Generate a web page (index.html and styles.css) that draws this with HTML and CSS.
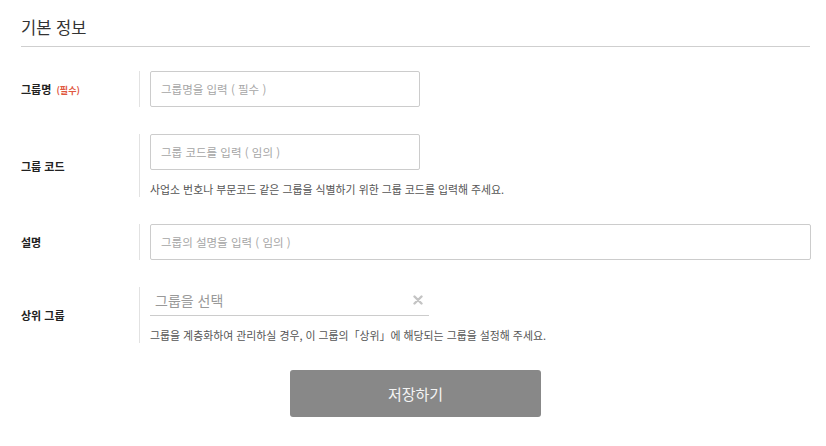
FILE: index.html
```html
<!DOCTYPE html>
<html lang="ko">
<head>
<meta charset="utf-8">
<link rel="stylesheet" href="styles.css">
</head>
<body>
<div class="page">
  <h2 class="title">기본 정보</h2>
  <div class="form">
    <div class="row">
      <div class="label">그룹명 <span class="req">(필수)</span></div>
      <div class="field">
        <div class="input w270"><span class="ph">그룹명을 입력 ( 필수 )</span></div>
      </div>
    </div>
    <div class="row">
      <div class="label">그룹 코드</div>
      <div class="field">
        <div class="input w270"><span class="ph">그룹 코드를 입력 ( 임의 )</span></div>
        <p class="help">사업소 번호나 부문코드 같은 그룹을 식별하기 위한 그룹 코드를 입력해 주세요.</p>
      </div>
    </div>
    <div class="row">
      <div class="label">설명</div>
      <div class="field">
        <div class="input wide"><span class="ph">그룹의 설명을 입력 ( 임의 )</span></div>
      </div>
    </div>
    <div class="row">
      <div class="label">상위 그룹</div>
      <div class="field">
        <div class="select">
          <span class="sel-ph">그룹을 선택</span>
          <svg class="clear" width="10" height="10" viewBox="0 0 10 10"><path d="M1.5 1.5 L8.5 8.5 M8.5 1.5 L1.5 8.5" stroke="#c4c4c4" stroke-width="2.4" stroke-linecap="round"/></svg>
        </div>
        <p class="help">그룹을 계층화하여 관리하실 경우, 이 그룹의「상위」에 해당되는 그룹을 설정해 주세요.</p>
      </div>
    </div>
  </div>
  <div class="actions">
    <button class="save">저장하기</button>
  </div>
</div>
</body>
</html>
```
FILE: styles.css
```css
* { box-sizing: border-box; }
body {
  margin: 0;
  background: #fff;
  font-family: "Noto Sans CJK KR", "Noto Sans", sans-serif;
  color: #222;
}
.page {
  padding: 0 16px 0 21px;
}
.title {
  margin: 0;
  padding-top: 15px;
  height: 47px;
  font-size: 16.5px;
  font-weight: 400;
  line-height: 24px;
  color: #333;
  border-bottom: 1px solid #cfcfcf;
}
.form {
  padding-top: 24px;
  display: flex;
  flex-direction: column;
  gap: 27px;
}
.row {
  display: flex;
  align-items: center;
}
.label {
  width: 118px;
  flex: none;
  font-size: 11px;
  font-weight: 700;
  color: #222;
}
.req {
  font-size: 9px;
  font-weight: 700;
  color: #e0573f;
  margin-left: 2px;
}
.field {
  flex: 1;
  align-self: stretch;
  border-left: 1px solid #e2e2e2;
  padding-left: 10px;
}
.input {
  height: 36px;
  border: 1px solid #cccccc;
  border-radius: 2px;
  padding: 0 10px;
  display: flex;
  align-items: center;
}
.w270 { width: 270px; }
.wide { width: 661px; }
.ph {
  font-size: 11.5px;
  color: #a6a6a6;
}
.help {
  margin: 11px 0 0;
  font-size: 10.9px;
  line-height: 16px;
  color: #555;
}
.select {
  width: 279px;
  height: 29px;
  border-bottom: 1px solid #cccccc;
  display: flex;
  align-items: center;
  justify-content: space-between;
  padding: 0 6px 2px 5px;
}
.sel-ph {
  font-size: 14px;
  color: #999;
}
.clear { display: block; }
.actions {
  display: flex;
  justify-content: center;
  padding-top: 27px;
}
.save {
  width: 251px;
  height: 47px;
  border: none;
  border-radius: 3px;
  background: #888888;
  color: #f4f4f4;
  font-family: inherit;
  font-size: 15px;
}
```
